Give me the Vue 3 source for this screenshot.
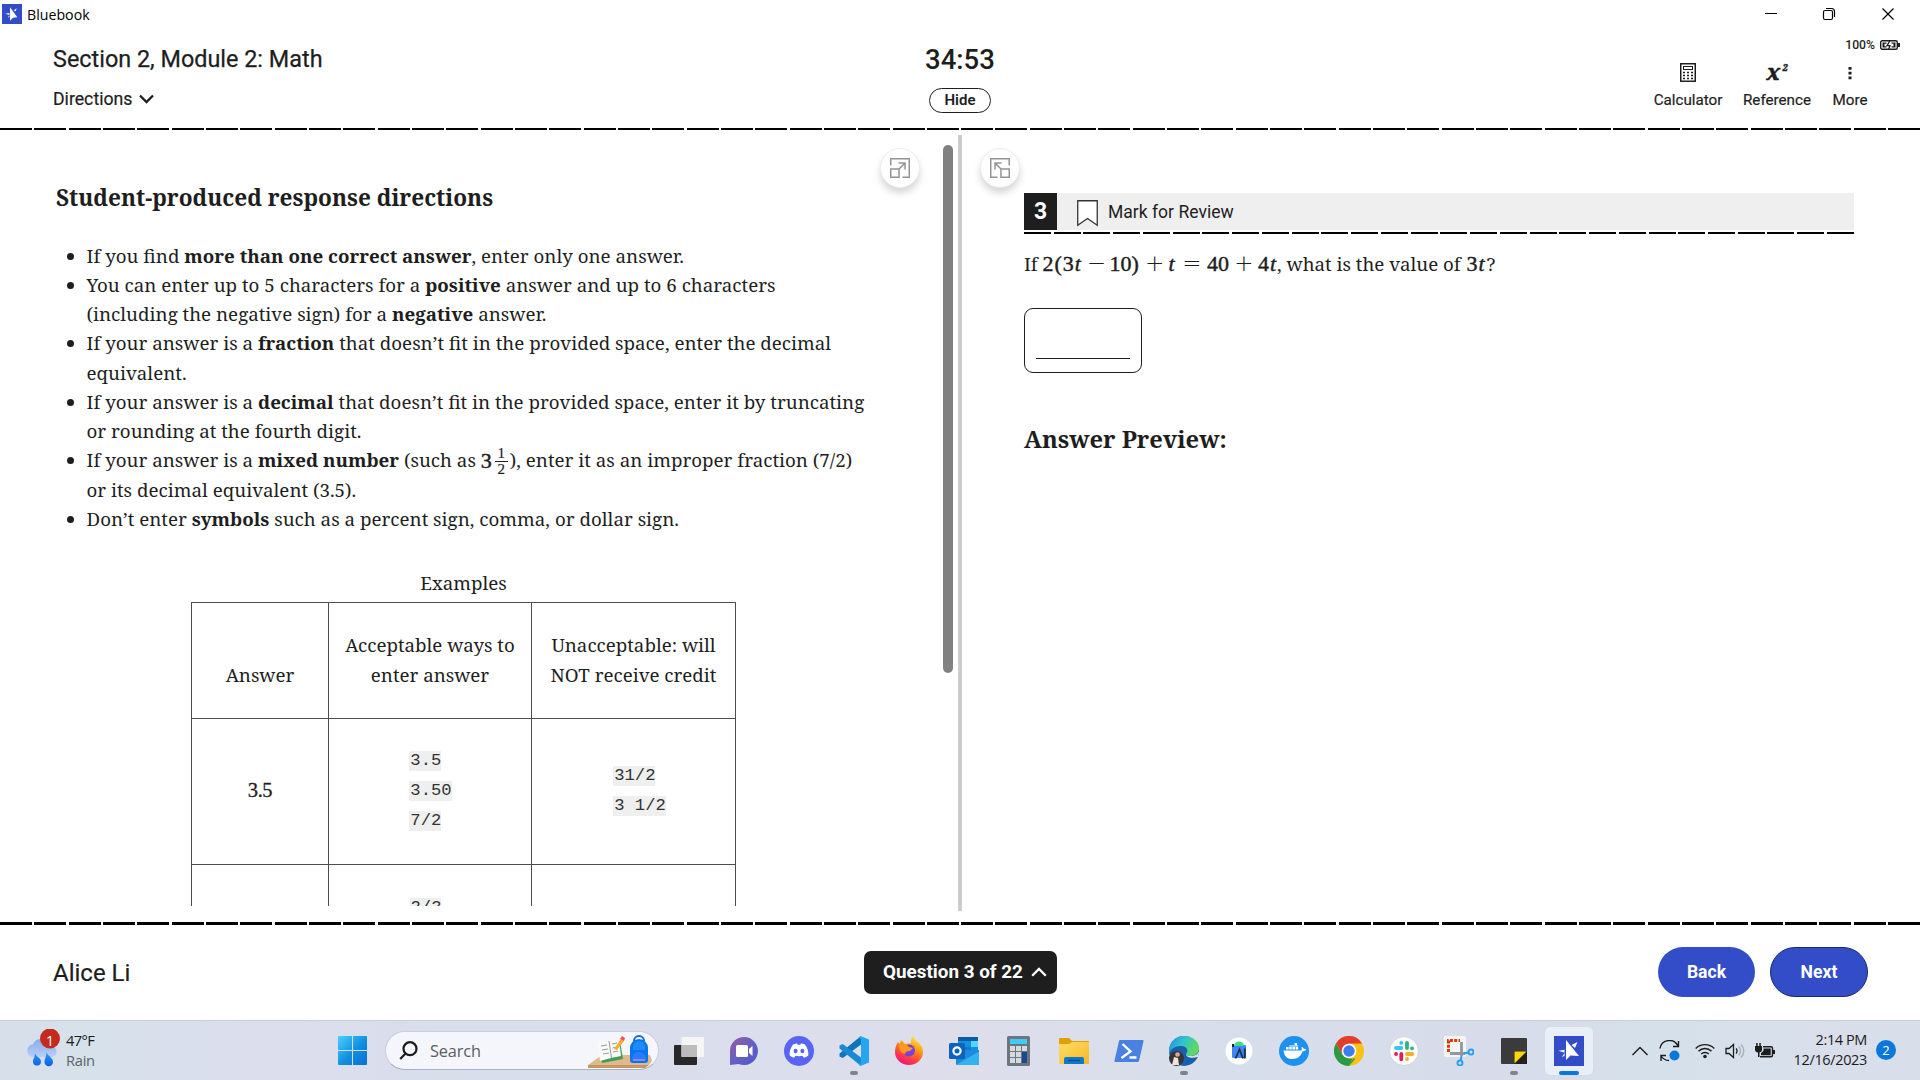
<script setup>
const tools = ['Calculator', 'Reference', 'More']
const accepted = ['3.5', '3.50', '7/2']
const rejected = ['31/2', '3 1/2']
</script>

<template>
  <div class="screen">
    <div class="titlebar">
      <svg class="app-ico" width="20" height="20" viewBox="0 0 30 30">
        <rect width="30" height="30" fill="#324dc7" />
        <path d="M12 5v20l4.500-4.500L23 20zM5 14.500l6-1v3zM17.500 9.500l4.500-3-1.500 4.500zM9 20l2-3v3z" fill="#fff" />
      </svg>
      <span class="app-name">Bluebook</span>
      <svg class="win" width="130" height="14" viewBox="0 0 130 14" fill="none" stroke="#000" stroke-width="1">
        <path d="M0 6.500h12" />
        <rect x="58.500" y="3.500" width="9" height="9" rx="1.500" stroke-width="1.200" />
        <path d="M61 1.500h5.500a3 3 0 0 1 3 3V10" stroke-width="1.200" />
        <path d="M117.500 1.500l11 11M128.500 1.500l-11 11" stroke-width="1.200" />
      </svg>
    </div>

    <header class="header">
      <div class="head-left">
        <div class="module">Section 2, Module 2: Math</div>
        <div class="directions">
          Directions
          <svg width="15" height="10" viewBox="0 0 15 10" fill="none" stroke="#1e1e1e" stroke-width="2.300"><path d="M1 1.500l6.500 6.500L14 1.500" /></svg>
        </div>
      </div>
      <div class="head-mid">
        <div class="timer">34:53</div>
        <div class="hide">Hide</div>
      </div>
      <div class="head-right">
        <div class="battery">
          100%
          <svg width="20" height="10" viewBox="0 0 20 10">
            <rect x=".7" y=".7" width="16.600" height="8.600" rx="1.500" fill="#fff" stroke="#1e1e1e" stroke-width="1.400" />
            <path d="M18 3h2v4h-2zM2.500 2.500h4v1.300h-2v2.400h2v1.300h-4zM11.500 2.500h4v5h-4V6.200h2V3.800h-2z" fill="#1e1e1e" />
            <path d="M9.800 1L7 5.600h3L8.700 9" fill="none" stroke="#1e1e1e" stroke-width="1.300" />
          </svg>
        </div>
        <div class="tools">
          <div v-for="t in tools" :key="t" class="tool" :class="t.toLowerCase()">
            <svg v-if="t === 'Calculator'" width="16" height="19" viewBox="0 0 16 19">
              <rect x=".75" y=".75" width="14.500" height="17.500" fill="#fff" stroke="#1e1e1e" stroke-width="1.500" />
              <rect x="3.500" y="3.500" width="9" height="3" fill="none" stroke="#1e1e1e" />
              <path d="M3 9.500h10M3 12.500h10M3 15.500h10" stroke="#1e1e1e" stroke-width="1.500" stroke-dasharray="2 2" />
            </svg>
            <span v-else-if="t === 'Reference'" class="xsq">x<sup>2</sup></span>
            <svg v-else width="4" height="14" viewBox="0 0 4 14" fill="#1e1e1e">
              <path d="M.5 1h3v2.700h-3zM.5 5.800h3v2.700h-3zM.5 10.600h3v2.700h-3z" />
            </svg>
            <span class="tool-label">{{ t }}</span>
          </div>
        </div>
      </div>
    </header>
    <div class="dash"></div>

    <main class="main">
      <section class="left">
        <div class="left-text">
          <h2>Student-produced response directions</h2>
          <ul>
            <li>If you find <b>more than one correct answer</b>, enter only one answer.</li>
            <li>You can enter up to 5 characters for a <b>positive</b> answer and up to 6 characters<br />(including the negative sign) for a <b>negative</b> answer.</li>
            <li>If your answer is a <b>fraction</b> that doesn’t fit in the provided space, enter the decimal<br />equivalent.</li>
            <li>If your answer is a <b>decimal</b> that doesn’t fit in the provided space, enter it by truncating<br />or rounding at the fourth digit.</li>
            <li>If your answer is a <b>mixed number</b> (such as <span class="mixed">3<span class="frac"><i>1</i><i>2</i></span></span>), enter it as an improper fraction (7/2)<br />or its decimal equivalent (3.5).</li>
            <li>Don’t enter <b>symbols</b> such as a percent sign, comma, or dollar sign.</li>
          </ul>
          <table>
            <caption>Examples</caption>
            <tbody>
              <tr class="r1">
                <th class="c1">Answer</th>
                <th class="c2">Acceptable ways to<br />enter answer</th>
                <th class="c3">Unacceptable: will<br />NOT receive credit</th>
              </tr>
              <tr class="r2">
                <td><span class="tex">3.5</span></td>
                <td><div class="codes"><div v-for="c in accepted" :key="c"><code>{{ c }}</code></div></div></td>
                <td><div class="codes no"><div v-for="c in rejected" :key="c"><code>{{ c }}</code></div></div></td>
              </tr>
              <tr class="r3">
                <td></td>
                <td><div class="codes first"><code>2/3</code></div></td>
                <td></td>
              </tr>
            </tbody>
          </table>
        </div>
        <div class="round">
          <svg width="20" height="20" viewBox="0 0 20 20" fill="none" stroke="#949494" stroke-width="1.500">
            <path d="M.75 7.500V.75h18.500v18.500H12.500M.75 11h8.300v8.250H.75zM9 11l6-6M8.500 5H15v6.500" />
          </svg>
        </div>
        <div class="scroll"></div>
      </section>
      <div class="divider"></div>
      <section class="right">
        <div class="round">
          <svg width="20" height="20" viewBox="0 0 20 20" fill="none" stroke="#949494" stroke-width="1.500">
            <path d="M19.250 7.500V.75H.75v18.500H7.500M19.250 11h-8.300v8.250h8.300zM11 11L5 5M11.500 5H5v6.500" />
          </svg>
        </div>
        <div class="question">
          <div class="qbar">
            <div class="qnum">3</div>
            <svg width="21" height="27" viewBox="0 0 21 27"><path d="M.75.75h19.500v24.500L10.500 18.500.75 25.250z" fill="#fff" stroke="#333" stroke-width="1.300" /></svg>
            <span>Mark for Review</span>
          </div>
          <div class="dash qdash"></div>
          <p class="prompt">
            <span class="t-if">If</span><span class="tex m-a">2(3<i>t</i></span><span class="op m-minus">−</span><span class="tex m-10">10)</span><span class="op m-plus first-plus">+</span><span class="tex m-t"><i>t</i></span><span class="op m-eq">=</span><span class="tex m-40">40</span><span class="op m-plus">+</span><span class="tex m-4t">4<i>t</i></span><span class="t-what">, what is the value of</span><span class="tex m-3t">3<i>t</i></span><span>?</span>
          </p>
          <div class="answer"><div class="line"></div></div>
          <h2 class="preview">Answer Preview:</h2>
        </div>
      </section>
    </main>

    <div class="dash thick"></div>
    <footer class="footer">
      <div class="student">Alice Li</div>
      <div class="qpick">
        Question 3 of 22
        <svg width="16" height="10" viewBox="0 0 16 10" fill="none" stroke="#fff" stroke-width="2.300"><path d="M1.200 8.800L8 2l6.800 6.800" /></svg>
      </div>
      <div class="nav">
        <div class="btn">Back</div>
        <div class="btn next">Next</div>
      </div>
    </footer>

    <div class="taskbar">
      <div class="weather">
        <svg width="36" height="40" viewBox="0 0 36 40">
          <defs>
            <linearGradient id="cl" x1="0" y1="0" x2="0" y2="1"><stop offset="0" stop-color="#86abee" /><stop offset="1" stop-color="#b9cff6" /></linearGradient>
            <linearGradient id="dr" x1="0" y1="0" x2="0" y2="1"><stop offset="0" stop-color="#2f9bff" /><stop offset="1" stop-color="#0a5fe6" /></linearGradient>
          </defs>
          <path d="M6.500 28a6.500 6.500 0 0 1 .5-12.800A9 9 0 0 1 24 17a5.500 5.500 0 0 1 2 11z" fill="url(#cl)" />
          <path d="M9 24c1 4 6 4.500 6 8.500a4 4 0 0 1-8 0c0-3 2-4 2-8.500zM20.500 23c1 4 6.500 5.500 6.500 10a4.200 4.200 0 0 1-8.500 0c0-3.500 2-5 2-10z" fill="url(#dr)" />
          <circle cx="24" cy="9.500" r="10" fill="#c42b1c" />
        </svg>
        <span class="wbadge">1</span>
        <div class="wtext"><div>47°F</div><div class="dim">Rain</div></div>
      </div>

      <div class="start">
        <svg width="29" height="29" viewBox="0 0 29 29">
          <defs><linearGradient id="wn" x1="0" y1="0" x2="1" y2="1"><stop offset="0" stop-color="#4ad0fb" /><stop offset=".55" stop-color="#0f8ee0" /><stop offset="1" stop-color="#0a6fd0" /></linearGradient></defs>
          <path d="M1 0h13v14H0V1a1 1 0 0 1 1-1zM15 0h13a1 1 0 0 1 1 1v13H15zM0 15h14v14H1a1 1 0 0 1-1-1zM15 15h14v13a1 1 0 0 1-1 1H15z" fill="url(#wn)" />
        </svg>
      </div>

      <div class="search">
        <svg width="19" height="19" viewBox="0 0 19 19" fill="none" stroke="#1c1c1c" stroke-width="2.200"><circle cx="11" cy="7.700" r="6.500" /><path d="M6.500 12.500L1.200 18" /></svg>
        <span>Search</span>
        <svg class="art" width="66" height="36" viewBox="0 0 66 36">
          <path d="M14 21h48l2 6-3 4H0z" fill="#deb98c" /><path d="M0 31h61l-4 3H0z" fill="#c59663" />
          <path d="M11 10l21-3 3 18-21 4z" fill="#3f9d55" /><path d="M10 8l11-1 10-2 2 17-10 2-11 3z" fill="#fafafa" /><path d="M21 7l2.500 17M13 12l6-1M14 16l6-1M15 20l6-1M24 10l5-1M24.500 14l5-1M25 18l5-1" stroke="#999" fill="none" />
          <path d="M26 15l7-10 3 2-7 9z" fill="#ffab2e" /><path d="M32 5l2-3 3 2-1 3z" fill="#f0554b" />
          <path d="M46 7a5 5 0 0 1 10 0" fill="none" stroke="#1268d8" stroke-width="2" />
          <path d="M42 14a9 9 0 0 1 18 0v12a3 3 0 0 1-3 3H45a3 3 0 0 1-3-3z" fill="#0b74e8" /><path d="M45 13a6 6 0 0 1 12 0v3H45z" fill="#1c8cf8" /><path d="M44 25a7 7 0 0 1 14 0v1H44z" fill="#2a7bff" /><path d="M45 26h12" stroke="#b58cf5" stroke-width="1.500" />
        </svg>
      </div>

      <div class="apps">
        <div class="slot"><svg width="30" height="30" viewBox="0 0 30 30"><rect y="9" width="23" height="20" rx="1" fill="#282828" /><rect x="7.500" y="1" width="22.500" height="20" rx="1" fill="#f5f5f5" /><path d="M7.500 9H23v12H7.500z" fill="#bcbcbc" /></svg></div>
        <div class="slot"><svg width="30" height="30" viewBox="0 0 30 30"><defs><linearGradient id="ch" x1="0" y1="0" x2="1" y2="1"><stop offset="0" stop-color="#9b5c9e" /><stop offset=".5" stop-color="#6560c2" /><stop offset="1" stop-color="#5059c9" /></linearGradient></defs><path d="M15 1a14 14 0 1 1-5.500 26.900L1 29V15A14 14 0 0 1 15 1z" fill="url(#ch)" /><rect x="7" y="9" width="12" height="12" rx="1.500" fill="#fff" /><path d="M20 13l3.500-3v10L20 17z" fill="#fff" /></svg></div>
        <div class="slot"><svg width="30" height="30" viewBox="0 0 30 30"><circle cx="15" cy="15" r="15" fill="#5865f2" /><path d="M9 8.500c2-.8 3-1 4-1l.7 1.300h2.600L17 7.500c1 0 2 .2 4 1 2.500 3.500 3.700 7 3.300 11-1.500 1.200-3 2-4.500 2.300l-1.300-2c-2 .6-5 .6-7 0l-1.300 2c-1.500-.3-3-1.100-4.500-2.300-.4-4 .8-7.500 3.300-11z" fill="#fff" /><ellipse cx="11.600" cy="15" rx="2" ry="2.200" fill="#5865f2" /><ellipse cx="18.400" cy="15" rx="2" ry="2.200" fill="#5865f2" /></svg></div>
        <div class="slot run"><svg width="30" height="30" viewBox="0 0 30 30"><path d="M22 0v8.500L3.800 22 .5 20.500v-3z" fill="#0d74bd" /><path d="M22 30v-8.500L3.800 8 .5 9.500v3z" fill="#1a8ad4" /><path d="M21.500 0L30 3.500v23L21.500 30l-2-1.500 2.500-1.500V3l-2.500-1.500z" fill="#26a6f0" /></svg></div>
        <div class="slot"><svg width="30" height="30" viewBox="0 0 30 30"><defs><linearGradient id="ff" x1=".8" y1="0" x2=".3" y2="1"><stop offset="0" stop-color="#fff14a" /><stop offset=".4" stop-color="#ff980e" /><stop offset=".75" stop-color="#ff3a48" /><stop offset="1" stop-color="#e31587" /></linearGradient></defs><path d="M4 6l2 2 1-4 4 4 6-1c0-3 0-5 2-7l3 5c4 2 7 6 7 11a14 13 0 0 1-28 0C1 12 2 9 4 6z" fill="url(#ff)" /><circle cx="15" cy="14.500" r="6" fill="#7a3fe0" /><path d="M5 9c4-2 8-1 10 2l4 1-3 3c-3 0-5 1-5 3-4-1-6-4-6-9z" fill="#ff9a1e" /></svg></div>
        <div class="slot"><svg width="30" height="30" viewBox="0 0 30 30"><path d="M9 1h20v13H9z" fill="#1490df" /><path d="M9 1h20v4H9z" fill="#0a5ca8" /><path d="M22 5h7v6h-7z" fill="#50d9ff" /><path d="M15 11h7v6h-7z" fill="#0f78d4" /><path d="M7 14l23 0v14a1 1 0 0 1-1 1H8a1 1 0 0 1-1-1z" fill="#1c8bdc" /><path d="M7 29l22-13 1 0v12l-1 1z" fill="#32b2ee" /><rect y="7" width="16" height="16" rx="1.500" fill="#0b63bd" /><circle cx="8" cy="15" r="3.600" fill="none" stroke="#fff" stroke-width="2.200" /></svg></div>
        <div class="slot"><svg width="24" height="30" viewBox="0 0 24 30"><rect width="23" height="30" rx="1.500" fill="#6d757d" /><path d="M3 3h17v5H3z" fill="#40cdf5" /><path d="M3 10h5v5H3zM9 10h5v5H9zM15 10h5v5h-5zM3 16h5v5H3zM9 16h5v5H9zM3 22h5v5H3zM9 22h5v5H9z" fill="#d5dade" /><path d="M15 16h5v11h-5z" fill="#174a92" /></svg></div>
        <div class="slot"><svg width="30" height="30" viewBox="0 0 30 30"><defs><linearGradient id="fo" x1="0" y1="0" x2="1" y2="1"><stop offset="0" stop-color="#ffdc66" /><stop offset="1" stop-color="#f8b82a" /></linearGradient></defs><path d="M0 3a1 1 0 0 1 1-1h9l3 3h16a1 1 0 0 1 1 1v7H0z" fill="#dfa000" /><path d="M0 8h10l3-2h17v22H1a1 1 0 0 1-1-1z" fill="url(#fo)" /><path d="M5 28v-5a2 2 0 0 1 2-2h16a2 2 0 0 1 2 2v5z" fill="#1078c8" /><path d="M9 24.500h12" stroke="#0b4f91" stroke-width="1.500" /></svg></div>
        <div class="slot"><svg width="30" height="30" viewBox="0 0 30 30"><path d="M6 4h22.500a1 1 0 0 1 1 1.300L25 25a1.500 1.500 0 0 1-1.500 1H1.500a1 1 0 0 1-1-1.300L5 5a1.500 1.500 0 0 1 1-1z" fill="#4a80e0" /><path d="M8.500 8l8 7.500L7.500 22M15.500 21.500h7" fill="none" stroke="#fff" stroke-width="2.300" /></svg></div>
        <div class="slot run"><svg width="30" height="30" viewBox="0 0 30 30"><defs><linearGradient id="ed" x1="0" y1="0" x2="1" y2=".4"><stop offset="0" stop-color="#1c8fdc" /><stop offset=".5" stop-color="#2fc3cf" /><stop offset="1" stop-color="#5fd95f" /></linearGradient></defs><circle cx="15" cy="15" r="15" fill="#1a5fae" /><path d="M0 14C1 5 7 0 15 0c9 0 15 6 15 12 0 5-4 8-8 8-3 0-5-1-5-2 3-3 1-8-5-8C6 10 1 13 0 18z" fill="url(#ed)" /><path d="M17 18c0 3 5 5 12 3l1-4v-2c-1 3-4 5-8 5-3 0-5-1-5-2z" fill="#d8deeb" /><circle cx="7.500" cy="22.500" r="7.500" fill="#393434" /><path d="M3 29l2-8 4 1 1 7z" fill="#e9e4e4" /><circle cx="8.500" cy="18.500" r="2.300" fill="#d9ab98" /></svg></div>
        <div class="slot"><svg width="30" height="30" viewBox="0 0 30 30"><circle cx="15" cy="15" r="13.500" fill="#fff" /><rect x="8" y="9" width="14" height="13" rx="1" fill="#4285f4" /><path d="M10 10a5 4.500 0 0 1 10 0z" fill="#3ddc84" /><path d="M8 8h2v3H8z" fill="#123" /><path d="M11.500 22.500l4-9 3.500 9M20.800 12.500v10" fill="none" stroke="#103349" stroke-width="1.800" /></svg></div>
        <div class="slot"><svg width="30" height="30" viewBox="0 0 30 30"><circle cx="15" cy="15" r="15" fill="#1d91ef" /><path d="M4.500 14.500H22c1-.5 1-2.500.5-3.500 1-.5 2 1 2.300 1.800 1 0 2 .2 2.400.5-.5 1.500-2 2-3.500 2-2 5.500-5.500 7.700-10.500 7.700-5 0-8-2.500-8.700-8.500z" fill="#fff" /><path d="M7 11h2.600v2.600H7zM10.200 11h2.600v2.600h-2.600zM13.400 11H16v2.600h-2.600zM16.600 11h2.600v2.600h-2.600zM10.200 9.500h9v1h-9zM15.500 7h2.600v2.300h-2.600z" fill="#fff" /></svg></div>
        <div class="slot"><svg width="30" height="30" viewBox="0 0 30 30"><circle cx="15" cy="15" r="15" fill="#fbc116" /><path d="M2 7.500A15 15 0 0 1 28 7.500H15L8.500 18.700z" fill="#e33b2e" /><path d="M2 7.500l6.500 11.200L15 22.500h6.500L15 30A15 15 0 0 1 2 7.500z" fill="#2a9a48" /><path d="M15 30l6.500-11.200L22 15h-3v7z" fill="#fbc116" /><circle cx="15" cy="15" r="7.300" fill="#fff" /><circle cx="15" cy="15" r="5.700" fill="#3b7ded" /></svg></div>
        <div class="slot"><svg width="30" height="30" viewBox="0 0 30 30"><circle cx="15" cy="15" r="14.500" fill="#fbfbfb" stroke="#d3d3d6" /><g stroke-width="3.800" stroke-linecap="round"><path d="M12.300 6.800v.1M7 12h5.300" stroke="#36c5f0" /><path d="M18 7v5M23 12.300h.1" stroke="#2eb67d" /><path d="M18 18h5.300M18 23v.1" stroke="#ecb22e" /><path d="M12.300 18v5.300M7 18h.1" stroke="#e01e5a" /></g></svg></div>
        <div class="slot"><svg width="30" height="30" viewBox="0 0 30 30"><rect width="22" height="21" rx="2" fill="#f5f5f5" /><path d="M4.500 16V4.500h11.500" fill="none" stroke="#d83b01" stroke-width="3" stroke-dasharray="3 1.300" /><path d="M17.500 6v14M6 17.500h15" stroke="#9298a0" stroke-width="2.800" /><circle cx="27" cy="16" r="2.500" fill="none" stroke="#2aa1ec" stroke-width="2" /><circle cx="16" cy="27" r="2.500" fill="none" stroke="#2aa1ec" stroke-width="2" /><path d="M20 17.500l5-1M17.500 20l-1 5" stroke="#2aa1ec" stroke-width="2" /></svg></div>
        <div class="slot run"><svg width="26" height="26" viewBox="0 0 26 26"><path d="M1 0h24a1 1 0 0 1 1 1v12L13 26H1a1 1 0 0 1-1-1V1a1 1 0 0 1 1-1z" fill="#3b3b3b" /><path d="M13 13h13v13H13z" fill="#222" /><path d="M13.500 13.500H25.500L13.500 25.500z" fill="#ffd60a" /></svg></div>
        <div class="slot active"><svg width="30" height="30" viewBox="0 0 30 30"><rect width="30" height="30" fill="#324dc7" /><path d="M12 4v20l4.500-4.500L25 20zM4.500 14.700l6-1v3zM17.500 9l6-3-2.500 6zM8 21l2.500-4v3z" fill="#fff" /></svg></div>
      </div>

      <div class="tray">
        <svg class="chev" width="16" height="10" viewBox="0 0 16 10" fill="none" stroke="#1c1c1c" stroke-width="1.400"><path d="M.5 9L8 1.500 15.500 9" /></svg>
        <svg class="sync" width="22" height="22" viewBox="0 0 22 22" fill="none" stroke="#1c1c1c" stroke-width="1.400"><path d="M1 8.500A9.500 9.500 0 0 1 19 6M19.500 1v5.500H14M7 15.500H2V21M2 16a9.500 9.500 0 0 0 8 4.500" /><circle cx="15.500" cy="15.500" r="5" fill="#0a78d8" stroke="none" /></svg>
        <svg class="wifi" width="20" height="16" viewBox="0 0 20 16" fill="none" stroke="#1c1c1c" stroke-width="1.400"><path d="M.7 5.500a13 13 0 0 1 18.600 0M3.500 8.300a9 9 0 0 1 13 0M6.200 11a5.400 5.400 0 0 1 7.600 0" /><circle cx="10" cy="13.500" r="1.800" fill="#1c1c1c" stroke="none" /></svg>
        <svg class="vol" width="20" height="16" viewBox="0 0 20 16" fill="none" stroke="#1c1c1c" stroke-width="1.300"><path d="M1 5.500h3l4.500-4v13l-4.500-4H1zM11 5.500a3.500 3.500 0 0 1 0 5" /><path d="M13.500 3.500a6 6 0 0 1 0 9M16 1.500a9 9 0 0 1 0 13" stroke="#a7adb8" /></svg>
        <svg class="pwr" width="20" height="16" viewBox="0 0 20 16"><path d="M0 3h7v4a3 3 0 0 1-2.500 2.500V14H3V9.500A3 3 0 0 1 0 7zM1.200 0h1.500v3H1.200zM4.300 0h1.500v3H4.300z" fill="#1c1c1c" /><path d="M8 3.700h8a1.500 1.500 0 0 1 1.500 1.500v7.100a1.500 1.500 0 0 1-1.500 1.500H5" fill="none" stroke="#1c1c1c" stroke-width="1.400" /><path d="M8.500 5.500h7.200v6.700H6v-2l2.500-2.500zM18 7h2v4h-2z" fill="#1c1c1c" /></svg>
        <div class="clock"><div class="time">2:14 PM</div><div class="date">12/16/2023</div></div>
        <div class="note">2</div>
      </div>
    </div>
  </div>
</template>

<style>
html, body { margin: 0; background: #fff; overflow: hidden; }
</style>

<style scoped>
.screen { width: 1920px; height: 1080px; display: flex; flex-direction: column; background: #fff; color: #1e1e1e; font-family: Roboto, sans-serif; overflow: hidden; white-space: nowrap; }
svg { display: block; flex: none; }
.screen * { box-sizing: border-box; }

.titlebar { height: 28px; display: flex; align-items: center; padding: 0 24px 0 2px; flex: none; }
.app-name { margin-left: 5px; font: 14.200px/28px "Open Sans", sans-serif; color: #000; padding-top: 1px; }
.win { margin-left: auto; margin-right: 1px; }

.header { height: 100px; display: flex; position: relative; padding-left: 53px; flex: none; }
.head-left { width: 400px; padding-top: 15px; }
.module { font-size: 23.400px; line-height: 32px; font-weight: 400; -webkit-text-stroke: .25px #1e1e1e; }
.directions { display: flex; align-items: center; gap: 7px; font-size: 17.700px; line-height: 22px; margin-top: 13px; -webkit-text-stroke: .2px #1e1e1e; }
.head-mid { width: 120px; margin-left: 447px; display: flex; flex-direction: column; align-items: center; padding-top: 16px; }
.timer { font-size: 27.500px; line-height: 32px; font-weight: 500; }
.hide { margin-top: 12px; width: 62px; height: 25px; border: 1px solid #1e1e1e; border-radius: 13px; text-align: center; font-size: 15px; line-height: 22px; font-weight: 600; }
.head-right { margin-left: auto; width: 300px; padding-top: 10px; display: flex; flex-direction: column; align-items: stretch; }
.battery { display: flex; justify-content: flex-end; align-items: center; gap: 5px; padding-right: 20px; font-size: 12.200px; line-height: 14px; font-weight: 500; }
.tools { display: flex; margin-top: 10px; padding-left: 23px; }
.tool { width: 90px; height: 48px; display: flex; flex-direction: column; align-items: center; justify-content: space-between; padding-top: 1px; }
.tool.reference { width: 88px; }
.tool.more { width: 58px; padding-top: 4px; }
.tool-label { font-size: 15.200px; line-height: 20px; -webkit-text-stroke: .2px #1e1e1e; }
.xsq { font: italic 800 22px/14px "Noto Serif", serif; height: 19px; margin-top: 1px; letter-spacing: 1px; -webkit-text-stroke: .4px #1e1e1e; }
.xsq sup { font-size: 9px; line-height: 0; vertical-align: 9px; margin-left: 1px; letter-spacing: 0; }

.dash { height: 2px; flex: none; background: repeating-linear-gradient(90deg, #000 0 32px, transparent 32px 34.327px); }
.dash.thick { height: 3px; }
.dash.qdash { margin-top: 2px; background: repeating-linear-gradient(90deg, #000 0 27px, transparent 27px 29.740px); }

.main { height: 792px; display: flex; flex: none; }
.left { width: 958px; position: relative; height: 776px; overflow: hidden; display: flex; }
.left-text { width: 824px; padding-left: 56px; font-family: "Noto Serif", serif; }
h2 { margin: 0; font: 700 22.640px/32px "Noto Serif", serif; }
.left-text h2 { margin-top: 52px; }
ul { margin: 26.700px 0 0; padding-left: 30.500px; font-size: 18.750px; line-height: 29.250px; }
li { height: 29.250px; }
li:has(br) { height: 58.500px; }
.mixed { font: 22px/1 "Liberation Serif", serif; display: inline-flex; align-items: center; height: 20px; vertical-align: -1px; -webkit-text-stroke: .45px #1e1e1e; margin-right: 2px; }
.frac { display: inline-flex; flex-direction: column; width: 13px; margin-left: 3px; font-size: 15px; line-height: 13px; text-align: center; height: 28px; -webkit-text-stroke: .2px #1e1e1e; }
.frac i { font-style: normal; height: 14px; }
.frac i + i { border-top: 1px solid #1e1e1e; padding-top: 1px; }
table { border-collapse: collapse; width: 545px; margin: 35.300px 0 0 135px; table-layout: fixed; font-size: 18.720px; line-height: 30px; text-align: center; }
caption { height: 34px; line-height: 29px; padding: 0; }
th, td { border: 1px solid #4d4d4d; padding: 0; font-weight: 400; vertical-align: middle; }
th { vertical-align: bottom; padding-bottom: 28px; }
.c1 { width: 137px; } .c2 { width: 203px; } .c3 { width: 204px; }
.r1 { height: 116px; } .r2 { height: 146px; } .r3 { height: 146px; }
.codes { display: inline-block; text-align: left; vertical-align: top; padding: 0 0 17px 1px; }
.codes.no { padding-left: 12px; }
.codes > div { height: 30px; }
.r3 td { vertical-align: top; }
.codes.first { width: 43px; padding-top: 20px; }
code { font: 17.200px/20px "Liberation Mono", monospace; background: #efefef; display: inline-block; height: 20px; vertical-align: -5px; padding-left: 1px; color: #333; }
.tex { font-family: "Liberation Serif", serif; font-size: 22px; -webkit-text-stroke: .45px #1e1e1e; }
td .tex { font-size: 20.500px; letter-spacing: -.4px; position: relative; top: -2px; -webkit-text-stroke: .3px #1e1e1e; }
.round { position: absolute; top: 18px; width: 40px; height: 40px; border-radius: 50%; background: #fff; display: flex; align-items: center; justify-content: center; border: 1px solid #ececec; box-shadow: 0 5px 7px rgba(0, 0, 0, .16); }
.left .round { left: 880px; }
.scroll { position: absolute; left: 943px; top: 15px; width: 10px; height: 528px; border-radius: 5px; background: #808080; }
.divider { width: 4px; height: 776px; margin-top: 5px; background: #ccc; }
.right { flex: 1; position: relative; padding: 63px 66px 0 62px; }
.right .round { left: 17.500px; }
.qbar { height: 37px; background: #efefef; display: flex; align-items: center; font-size: 17.550px; }
.qnum { width: 33px; height: 37px; background: #1e1e1e; color: #fff; font-weight: 700; font-size: 23px; line-height: 37px; text-align: center; margin-right: 20px; }
.qbar svg { margin-top: 3px; }
.qbar span { margin-left: 10px; }
.prompt { margin: 13px 0 0; display: flex; height: 37px; line-height: 34px; font-family: "Noto Serif", serif; font-size: 18.720px; align-items: baseline; }
.prompt span { flex: none; }
.op { font: 200 23px/20px "DejaVu Sans", sans-serif; text-align: center; }
.t-if { width: 18.500px; }
.m-a { width: 41px; letter-spacing: 1px; } .m-minus { width: 26px; } .m-10 { width: 31.500px; } .m-plus { width: 28px; } .first-plus { width: 27.500px; }
.m-t { width: 8.500px; } .m-eq { width: 30px; } .m-40 { width: 23px; } .m-4t { width: 19px; letter-spacing: 1px; }
.t-what { width: 189.500px; } .m-3t { width: 20px; letter-spacing: 1px; }
.answer { width: 118px; height: 65px; border: 1px solid #1e1e1e; border-radius: 9px; margin-top: 24px; padding: 49px 11px 0; }
.line { height: 1px; background: #1e1e1e; }
.preview { margin-top: 50px; font-size: 23.750px; }

.footer { height: 95px; display: flex; align-items: center; justify-content: space-between; position: relative; padding: 0 52px 0 53px; flex: none; }
.student { font-size: 24px; width: 200px; -webkit-text-stroke: .2px #1e1e1e; }
.qpick { position: absolute; left: 864px; top: 26px; width: 193px; height: 43px; border-radius: 7px; background: #1e1e1e; color: #fff; font-weight: 700; font-size: 18.850px; display: flex; align-items: center; padding: 0 0 2px 19px; gap: 8px; }
.nav { display: flex; gap: 15px; margin-top: -1px; }
.btn { width: 97px; height: 50px; border-radius: 25px; background: #324dc7; color: #fff; font-weight: 700; font-size: 17.600px; line-height: 50px; text-align: center; }
.btn.next { width: 98px; border: 1px solid #1b2a6b; line-height: 48px; }

.taskbar { height: 60px; flex: none; display: flex; align-items: center; position: relative; border-top: 1px solid #c6cddd; background: linear-gradient(90deg, #d7dfea 0, #d6e1ea 80px, #dcdded 260px, #d9deeb 440px, #dadeec 700px, #dedeeb 960px, #d7deeb 1250px, #d8dcea 1500px, #d5e0ea 1650px, #d8e0eb 1780px, #d8deea 1920px); font-family: "Open Sans", sans-serif; }
.weather { width: 328px; display: flex; position: relative; padding-left: 26px; align-items: center; }
.weather svg { margin-top: -3px; }
.wbadge { position: absolute; left: 40px; top: 0; width: 20px; line-height: 18px; color: #fff; font-size: 14px; text-align: center; }
.wtext { font-size: 14.700px; line-height: 20px; letter-spacing: -.6px; color: #1c1c1c; margin: -2px 0 0 4px; }
.dim { color: #5d6169; letter-spacing: -.3px; }
.start { width: 57px; display: flex; padding-left: 10px; }
.search { width: 274px; height: 39px; border-radius: 20px; background: #f4f6fb; border: 1px solid #c9cedc; border-bottom-color: #a9b0c2; display: flex; align-items: center; padding-left: 13px; font-size: 16.300px; letter-spacing: -.1px; color: #5a5d63; position: relative; }
.search span { margin-left: 12px; }
.art { position: absolute; right: 4px; top: 2px; }
.apps { display: flex; gap: 7px; margin-left: 6px; }
.slot { width: 48px; height: 48px; display: flex; align-items: center; justify-content: center; position: relative; }
.slot.run::after, .slot.active::after { content: ""; position: absolute; bottom: 0; width: 8px; height: 4px; border-radius: 2px; background: #80838c; left: 20px; }
.slot.active { background: #eaeef7; border-radius: 5px; box-shadow: 0 0 1px #c2c8d4; }
.slot.active::after { width: 20px; left: 14px; background: #0a78d8; }
.tray { display: flex; align-items: center; margin-left: 39px; flex: 1; }
.sync { margin-left: 11px; } .wifi { margin-left: 14px; } .vol { margin-left: 10px; } .pwr { margin-left: 10px; }
.clock { margin-left: auto; margin-right: 9px; text-align: right; font-size: 14.500px; line-height: 20px; color: #1c1c1c; margin-top: -1px; }
.time { letter-spacing: -.4px; } .date { letter-spacing: -.35px; }
.note { width: 20px; height: 20px; border-radius: 50%; background: #0a78d8; color: #fff; font-size: 13px; line-height: 20px; text-align: center; margin: -1px 24px 0 0; }
</style>
